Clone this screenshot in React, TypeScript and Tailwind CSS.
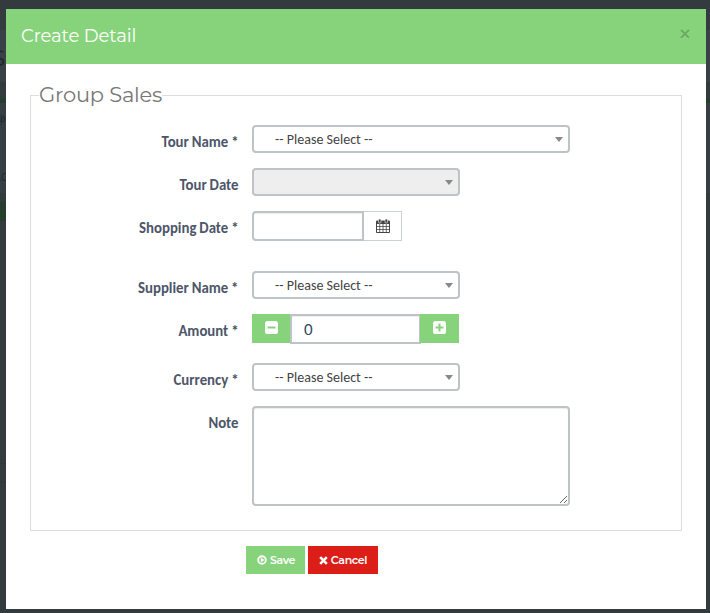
import type { ReactNode } from 'react';

const field = 'border-2 border-[#bdc3c7] rounded-[4px]';

function Row({ label, className, children }: { label: string; className: string; children: ReactNode }) {
  return (
    <div className={`flex items-start ${className}`}>
      <label className="w-[207.5px] shrink-0 origin-right scale-x-[0.925] whitespace-nowrap pt-[6px] text-right text-[16px] font-bold leading-[22px] text-[#4d5669] [word-spacing:-0.5px]">{label}</label>
      <div className="ml-[13.5px] flex">{children}</div>
    </div>
  );
}

function Select({ text, width, disabled }: { text?: string; width: string; disabled?: boolean }) {
  return (
    <button className={`flex h-[28px] items-center justify-between pl-[20.5px] pr-[5px] text-[15px] leading-6 text-[#444] ${field} ${width} ${disabled ? 'bg-[#eee]' : 'bg-white'}`}>
      <span className="origin-left scale-x-[0.935] whitespace-pre">{text}</span>
      <span className="h-0 w-0 border-x-[4px] border-t-[5px] border-x-transparent border-t-[#888]" />
    </button>
  );
}

function StepIcon({ plus }: { plus?: boolean }) {
  return (
    <svg width="13" height="13" viewBox="0 0 13 13" aria-hidden="true">
      <rect width="13" height="13" rx="2.6" fill="#fff" />
      <path d={plus ? 'M2.500 6.500h8M6.500 2.500v8' : 'M2.500 6.500h8'} stroke="#87d37c" strokeWidth="2" />
    </svg>
  );
}

export default function App() {
  return (
    <div className="relative h-[613px] w-[710px] overflow-hidden bg-[#343b3e] pl-[6px] pt-[9px] font-['Carlito','Lato',sans-serif]">
      <div className="absolute inset-x-0 top-[30px] h-[52px] bg-[#384145]" />
      <div className="absolute inset-x-0 top-[99px] h-[4px] bg-[#263e2d]" />
      <div className="absolute inset-x-0 top-[103px] h-[90px] bg-[#364044]" />
      <span className="absolute left-[-9px] top-[42px] font-['Montserrat','Inter',sans-serif] text-[23px] leading-8 text-[#202629]">S</span>
      <span className="absolute left-[-6px] top-[111px] font-serif text-[13px] italic leading-4 text-[#20272a]">@</span>
      <span className="absolute left-[-7px] top-[169px] font-['Montserrat','Inter',sans-serif] text-[11px] leading-4 text-[#202629]">AC</span>
      <div className="absolute left-0 top-[202px] h-[19px] w-[6px] bg-[#263e2d]" />
      <div className="absolute left-0 top-[463px] h-[20px] w-[6px] border-y border-[#2e373a]" />
      <div className="relative h-[600px] w-[700px] bg-white">
        <header className="flex h-[55px] items-center justify-between bg-[#87d37c] pl-[15px] pr-[16px]">
          <h1 className="pb-[2px] font-['Montserrat','Inter',sans-serif] text-[18px] font-normal leading-6 tracking-[-0.1px] text-white">Create Detail</h1>
          <svg className="-mt-[5px] h-[10px] w-[10px]" viewBox="0 0 10 10" aria-label="Close">
            <path d="M1 2l8 8M9 2l-8 8" stroke="#a3df99" strokeWidth="1.5" />
            <path d="M1 1l8 8M9 1L1 9" stroke="#6ca963" strokeWidth="2" />
          </svg>
        </header>
        <fieldset className="ml-[24px] mt-[15px] h-[452px] w-[652px] border border-[#dcddde]">
          <legend className="ml-[8px] h-[33px] whitespace-nowrap font-['Montserrat','Inter',sans-serif] text-[21px] leading-[31px] tracking-[-0.2px] text-[#777]">Group Sales</legend>
          <div className="mt-[13px]">
            <Row label="Tour Name *" className="h-[43px]"><Select text="-- Please Select --" width="w-[318px]" /></Row>
            <Row label="Tour Date" className="h-[43px]"><Select width="w-[208px]" disabled /></Row>
            <Row label="Shopping Date *" className="h-[60px]">
              <input className={`h-[30px] w-[112px] shadow-[inset_0_1px_1px_rgba(0,0,0,0.075)] ${field} !rounded-r-none`} />
              <button className="flex h-[30px] w-[38px] items-center justify-center border border-l-0 border-[#cbd0da]">
                <svg width="14" height="14" viewBox="0 0 14 14" aria-hidden="true">
                  <rect y="1.5" width="14" height="12.5" rx="1" fill="#444" />
                  <path d="M1 5h2.4v2.2H1zm3.2 0h2.4v2.2H4.200zm3.200 0h2.400v2.200H7.400zm3.200 0h2.400v2.200h-2.400zM1 8h2.400v2.200H1zm3.200 0h2.400v2.200H4.200zm3.200 0h2.400v2.200H7.400zm3.200 0h2.400v2.200h-2.400zM1 11h2.400v2H1zm3.200 0h2.400v2H4.200zm3.200 0h2.400v2H7.400zm3.200 0h2.400v2h-2.400z" fill="#fff" />
                  <rect x="2.500" y="0" width="2.500" height="4" rx="1" fill="#444" stroke="#fff" strokeWidth=".6" />
                  <rect x="9" y="0" width="2.500" height="4" rx="1" fill="#444" stroke="#fff" strokeWidth=".6" />
                </svg>
              </button>
            </Row>
            <Row label="Supplier Name *" className="h-[43px]"><Select text="-- Please Select --" width="w-[208px]" /></Row>
            <Row label="Amount *" className="h-[49px]">
              <button className="flex h-[29px] w-[38px] justify-center bg-[#87d37c] pl-px pt-[7px]"><StepIcon /></button>
              <input className="h-[30px] w-[131px] border-2 border-[#bdc3c7] pl-[12px] text-[17px] text-[#34495e] shadow-[inset_0_1px_1px_rgba(0,0,0,0.075)]" defaultValue="0" />
              <button className="-ml-px flex h-[29px] w-[39px] justify-center bg-[#87d37c] pt-[7px]"><StepIcon plus /></button>
            </Row>
            <Row label="Currency *" className="h-[43px]"><Select text="-- Please Select --" width="w-[208px]" /></Row>
            <Row label="Note" className="h-[100px]">
              <textarea className={`h-[100px] w-[318px] resize shadow-[inset_0_1px_1px_rgba(0,0,0,0.075)] ${field}`} />
            </Row>
          </div>
        </fieldset>
        <div className="ml-[240px] mt-[15px] flex gap-[3px] font-['Montserrat','Inter',sans-serif] text-[11px] font-semibold tracking-[-0.35px] text-white">
          <button className="flex h-[28px] w-[59px] items-center justify-center gap-[3px] bg-[#87d37c] pl-px">
            <svg width="10" height="10" viewBox="0 0 10 10" aria-hidden="true"><circle cx="5" cy="5" r="3.8" fill="none" stroke="currentColor" strokeWidth="1.900" /><path d="M3.800 2.800L7.500 5 3.800 7.200z" fill="currentColor" /></svg>
            Save
          </button>
          <button className="flex h-[28px] w-[70px] items-center justify-center gap-[3px] bg-[#dc1e18]">
            <svg width="9" height="9" viewBox="0 0 9 9" aria-hidden="true"><path d="M1.200 1.200l6.600 6.600M7.800 1.200L1.200 7.800" stroke="currentColor" strokeWidth="2.600" /></svg>
            Cancel
          </button>
        </div>
      </div>
    </div>
  );
}
